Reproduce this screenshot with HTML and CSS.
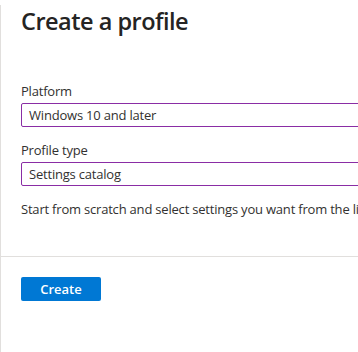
FILE: index.html
```html
<!DOCTYPE html>
<html lang="en">
<head>
	<meta charset="UTF-8">
	<title>Create a profile</title>
	<link rel="stylesheet" href="styles.css">
</head>
<body>
	<div class="panel">
		<h1 class="title">Create a profile</h1>
		<div class="form">
			<label class="field-label">Platform</label>
			<div class="select">Windows 10 and later</div>
			<label class="field-label">Profile type</label>
			<div class="select">Settings catalog</div>
			<p class="desc">Start from scratch and select settings you want from the library</p>
		</div>
		<div class="footer">
			<button class="btn btn_create">Create</button>
		</div>
	</div>
</body>
</html>
```

FILE: styles.css
```css
html, body{
	margin: 0px;
	padding: 0px;
	background-color: #FFFFFF;
	overflow: hidden;
}

body{
	font-family: "Open Sans", "Noto Sans", sans-serif;
	font-size: 13px;
	letter-spacing: -0.2px;
	color: #323130;
	width: 358px;
	height: 352px;
}

.panel{
	border-left: 1px solid #E1DFDD;
	height: 352px;
	box-sizing: border-box;
}

.title{
	margin: 5px 0px 0px 20px;
	font-size: 23.5px;
	letter-spacing: -0.5px;
	line-height: 32px;
	font-weight: 600;
	color: #252423;
}

.form{
	padding: 45px 0px 0px 20px;
	width: 420px;
}

.field-label{
	display: block;
	line-height: 18px;
	margin-bottom: 3px;
}

.select{
	height: 24px;
	box-sizing: border-box;
	border: 1px solid #8A2DA5;
	border-radius: 2px;
	padding: 0px 7px;
	line-height: 22px;
	margin-bottom: 14px;
	white-space: nowrap;
}

.desc{
	margin: 0px;
	line-height: 18px;
	white-space: nowrap;
	overflow: hidden;
	width: 337px;
}

.footer{
	margin-top: 38px;
	border-top: 1px solid #E1DFDD;
	padding: 20px 0px 0px 20px;
}

.btn{
	width: 80px;
	height: 24px;
	border: none;
	border-radius: 2px;
	background-color: #0078D4;
	color: white;
	font-family: "Open Sans", "Noto Sans", sans-serif;
	font-size: 13px;
	font-weight: 600;
	padding: 0px;
}
```
